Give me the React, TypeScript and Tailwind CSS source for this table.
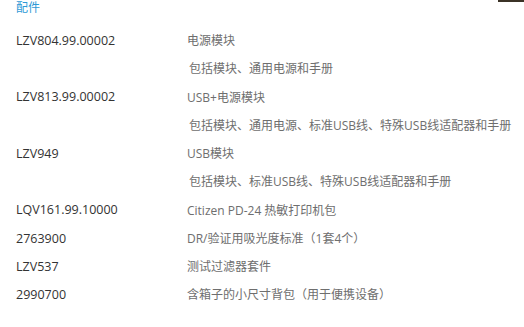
import React from "react"

const rows: { code?: string; desc: string; sub?: boolean }[] = [
  { code: "LZV804.99.00002", desc: "电源模块" },
  { desc: "包括模块、通用电源和手册", sub: true },
  { code: "LZV813.99.00002", desc: "USB+电源模块" },
  { desc: "包括模块、通用电源、标准USB线、特殊USB线适配器和手册", sub: true },
  { code: "LZV949", desc: "USB模块" },
  { desc: "包括模块、标准USB线、特殊USB线适配器和手册", sub: true },
  { code: "LQV161.99.10000", desc: "Citizen PD-24 热敏打印机包" },
  { code: "2763900", desc: "DR/验证用吸光度标准（1套4个）" },
  { code: "LZV537", desc: "测试过滤器套件" },
  { code: "2990700", desc: "含箱子的小尺寸背包（用于便携设备）" },
]

export default function App() {
  return (
    <div
      className="relative h-[327px] w-[524px] overflow-hidden bg-white text-[12px]"
      style={{ fontFamily: '"Open Sans", "Noto Sans CJK SC", sans-serif' }}
    >
      <div className="absolute right-0 top-0 h-[2px] w-[26px] bg-[#3b3226]" />
      <div className="px-4 pt-px">
        <div className="h-[14px] leading-[14px] text-[#2e9ad6]">配件</div>
        <div className="mt-[12px]">
          {rows.map((r, i) => (
            <div key={i} className="flex h-[28.25px] items-center">
              <div className="w-[171px] shrink-0 text-[12.5px] text-[#333333]">{r.code}</div>
              <div className={`whitespace-nowrap text-[#6e6e6e] ${r.sub ? "pl-[2px]" : ""}`}>{r.desc}</div>
            </div>
          ))}
        </div>
      </div>
    </div>
  )
}
